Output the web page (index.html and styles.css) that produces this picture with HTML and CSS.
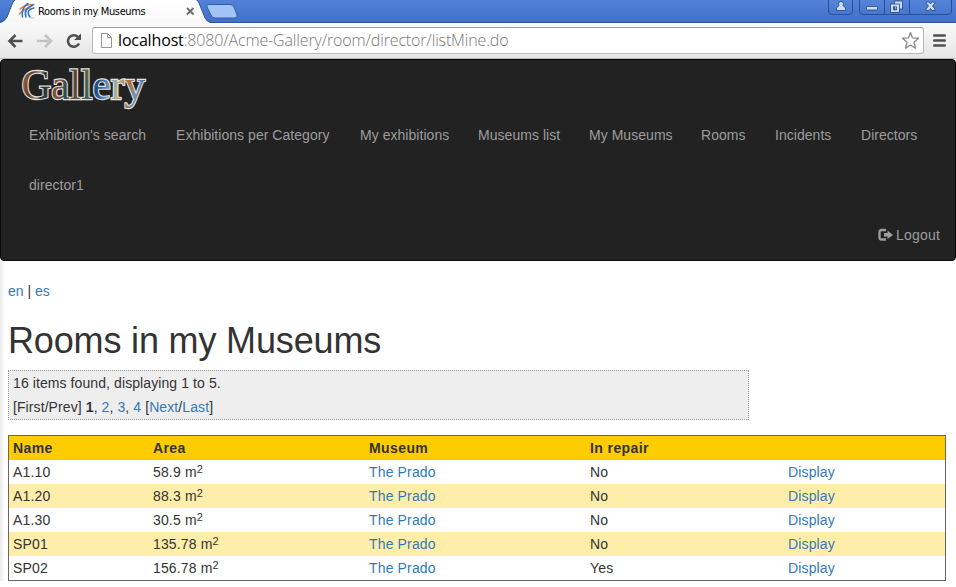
FILE: index.html
```html
<!DOCTYPE html>
<html lang="en">
<head>
<meta charset="utf-8">
<title>Rooms in my Museums</title>
<link rel="stylesheet" href="styles.css">
</head>
<body>
<header class="browser">
  <div class="tabs">
    <svg class="tab-art" width="956" height="23" viewBox="0 0 956 23">
      <defs>
        <linearGradient id="tab" x2="0" y2="1"><stop stop-color="#fff"/><stop offset="1" stop-color="#f8f8f8"/></linearGradient>
        <linearGradient id="win" x2="0" y2="1"><stop stop-color="#5685d9"/><stop offset="1" stop-color="#4676cd"/></linearGradient>
      </defs>
      <path d="M0 22.5H956" stroke="#2c559f"/>
      <path d="M0 23Q5 22 7 17L13 2Q14 0 16 0H195Q198 0 199 3L205 18Q207 22 211 23Z" fill="url(#tab)"/>
      <path d="M0 22Q5 21 7 17L13 2L15 0M197 0L199 3L205 18Q207 22 211 22.5" fill="none" stroke="#3159a5"/>
      <path d="M209 4.500H230Q233 4.500 234 7L237 15Q238 18 235 18H215Q212 18 211 15L207 7Q206 4.500 209 4.500Z" fill="#a2c4f4" stroke="#315da9"/>
      <g fill="none" stroke-linecap="round">
        <path d="M20 9Q25 4 34 4.500M19.500 14Q23 9 30 8" stroke="#f58220" stroke-width="1.600"/>
        <path d="M22.500 17Q21 8 28 3.500M26 17Q23 9 33 5M30 17Q25 10 34 8" stroke="#2c72cf" stroke-width="1.500"/>
        <path d="M31 18H34" stroke="#f5b070" stroke-width="1"/>
      </g>
      <path d="M187 8L193.500 14.500M193.500 8L187 14.500" stroke="#6b6b6b" stroke-width="1.800"/>
      <g fill="url(#win)" stroke="#294e96">
        <path d="M828.500 -1V11Q828.500 14.500 832 14.500H849Q852.500 14.500 852.500 11V-1Z"/>
        <path d="M859.500 -1V11Q859.500 14.500 863 14.500H948Q951.500 14.500 951.500 11V-1ZM884.500 0V14M909.500 0V14"/>
      </g>
      <g fill="#cbdcf8" stroke="#24427b" stroke-width=".8">
        <path d="M839 5.500A2.500 2.500 0 1 1 843 5.500L845.500 8V10.500H836.500V8Z"/>
        <rect x="866.500" y="6.500" width="11" height="3.500" rx="1"/>
        <path d="M894.500 1H902.500V9H894.500Z"/>
        <path fill-rule="evenodd" d="M890.500 4H899.500V12.500H890.500ZM893.500 6.800V9.800H896.500V6.800Z"/>
        <path d="M926 2H929L930.500 4L932 2H935V3L932.500 6L935 9V10.500H932L930.500 8.500L929 10.500H926V9L928.500 6L926 3Z"/>
      </g>
    </svg>
    <span class="tab-title">Rooms in my Museums</span>
  </div>
  <div class="toolbar">
    <svg class="nav-icons" width="84" height="35" viewBox="0 0 84 35" fill="none">
      <path d="M22.500 18H10M15.500 12L9.500 18L15.500 24" stroke="#505050" stroke-width="2.600"/>
      <path d="M37 18H50M45 12L51 18L45 24" stroke="#c3c3c3" stroke-width="2.600"/>
      <path d="M78 14A5.800 5.800 0 1 0 79 20.500" stroke="#505050" stroke-width="2.600"/><path d="M81 10.500V17H74Z" fill="#505050"/>
    </svg>
    <div class="address">
      <svg width="13" height="16" viewBox="0 0 13 16" fill="#fafafa" stroke="#969696"><path d="M1.500 1.500H7.500L11.500 5.500V15.500H1.500ZM7.500 1.500V5.500H11.500"/></svg>
      <span class="url"><b>localhost</b>:8080/Acme-Gallery/room/director/listMine.do</span>
      <svg class="star" width="20" height="19" viewBox="0 0 20 19" fill="#fff" stroke="#858585" stroke-width="1.200" stroke-linejoin="round"><path d="M10.500 1.500L12.500 7L18.500 7.200L14 11.200L15.500 17.200L10.500 14L5.500 17.200L7 11.200L2.500 7.200L8.500 7Z"/></svg>
    </div>
    <svg class="menu" width="13" height="13" viewBox="0 0 13 13" stroke="#505050" stroke-width="2.600" stroke-linecap="round"><path d="M1.300 1.500H11.700M1.300 6.500H11.700M1.300 11.500H11.700"/></svg>
  </div>
</header>
<nav class="navbar">
  <svg class="logo" width="150" height="51" viewBox="0 0 150 51">
    <defs><linearGradient id="paint" gradientUnits="userSpaceOnUse" x1="20" y1="15" x2="147" y2="38">
      <stop stop-color="#a96435"/><stop offset=".08" stop-color="#65402b"/><stop offset=".14" stop-color="#af9f8e"/><stop offset=".18" stop-color="#222c2b"/><stop offset=".3" stop-color="#8d553d"/><stop offset=".36" stop-color="#264e50"/><stop offset=".42" stop-color="#69412b"/><stop offset=".5" stop-color="#586642"/><stop offset=".6" stop-color="#184d88"/><stop offset=".68" stop-color="#6193bd"/><stop offset=".76" stop-color="#b1b48e"/><stop offset=".84" stop-color="#ad6b36"/><stop offset=".91" stop-color="#7194b2"/><stop offset="1" stop-color="#203e6f"/>
    </linearGradient></defs>
    <text class="logo-text" x="19.5" y="40" textLength="126" lengthAdjust="spacingAndGlyphs">Gallery</text>
  </svg>
  <div class="links">
    <a>Exhibition's search</a><a>Exhibitions per Category</a><a>My exhibitions</a><a>Museums list</a><a>My Museums</a><a>Rooms</a><a>Incidents</a><a>Directors</a><a>director1</a>
  </div>
  <a class="logout"><svg width="15" height="14" viewBox="0 0 15 14"><path d="M8 2H3.500Q1.500 2 1.500 4V9.500Q1.500 11.500 3.500 11.500H8" fill="none" stroke="#9d9d9d" stroke-width="2.300"/><path d="M6 5H9.500V2.500L15 7L9.500 11V8.500H6Z" fill="#9d9d9d"/></svg><span>Logout</span></a>
</nav>
<main>
  <div class="language"><a>en</a> | <a>es</a></div>
  <h1>Rooms in my Museums</h1>
  <div class="pagination"><div class="found">16 items found, displaying 1 to 5.</div><div class="pages">[First/Prev] <strong>1</strong>, <a>2</a>, <a>3</a>, <a>4</a> [<a>Next</a>/<a>Last</a>]</div></div>
  <table>
    <colgroup><col class="c-name"><col class="c-area"><col class="c-museum"><col class="c-repair"><col></colgroup>
    <thead><tr><th>Name</th><th>Area</th><th>Museum</th><th>In repair</th><th></th></tr></thead>
    <tbody>
      <tr><td>A1.10</td><td>58.9 m<sup>2</sup></td><td><a>The Prado</a></td><td>No</td><td><a>Display</a></td></tr>
      <tr><td>A1.20</td><td>88.3 m<sup>2</sup></td><td><a>The Prado</a></td><td>No</td><td><a>Display</a></td></tr>
      <tr><td>A1.30</td><td>30.5 m<sup>2</sup></td><td><a>The Prado</a></td><td>No</td><td><a>Display</a></td></tr>
      <tr><td>SP01</td><td>135.78 m<sup>2</sup></td><td><a>The Prado</a></td><td>No</td><td><a>Display</a></td></tr>
      <tr><td>SP02</td><td>156.78 m<sup>2</sup></td><td><a>The Prado</a></td><td>Yes</td><td><a>Display</a></td></tr>
    </tbody>
  </table>
</main>
</body>
</html>
```
FILE: styles.css
```css
* { box-sizing: border-box; }
html, body { height: 100%; overflow: hidden; }
body { margin: 0; background: #fff; color: #333; font: 14px/20px "Liberation Sans", Arial, sans-serif; }
a { color: #337ab7; text-decoration: none; }
.browser { height: 59px; }
.tabs { height: 23px; position: relative; background: linear-gradient(#5381d8, #3f6fc8); }
.tab-art { display: block; }
.tab-title { position: absolute; left: 38px; top: 4px; color: #000; font: 11px/15px "DejaVu Sans Condensed", "Noto Sans", sans-serif; white-space: nowrap; letter-spacing: -.37px; }
.toolbar { height: 36px; padding-bottom: 1px; display: flex; align-items: center; background: linear-gradient(#fafafa, #e5e5e5); border-bottom: 1px solid #b5b5b5; }
.nav-icons { flex: none; margin-right: 8px; }
.address { width: 832px; height: 27px; padding: 0 3px 0 7px; display: flex; align-items: center; background: #fff; border: 1px solid #b9b9b9; border-top-color: #9e9e9e; border-radius: 3px; }
.url { margin-left: 5px; color: #777; font: 300 16px/24px "Open Sans", "Noto Sans", sans-serif; letter-spacing: -.15px; white-space: nowrap; }
.url b { color: #000; font-weight: 400; letter-spacing: -.15px; }
.star { margin-left: auto; }
.menu { margin-left: 9px; }
.navbar { height: 202px; background: #222; border: 1px solid #080808; border-radius: 4px; }
.logo { display: block; height: 50px; overflow: visible; }
.logo-text { font: 43px "Liberation Serif", serif; fill: url(#paint); stroke: #e2e2e2; stroke-width: 2.300px; paint-order: stroke; }
.links { display: grid; grid-template-columns: 147px 184px 118px 111px 112px 74px 86px 87px; padding-left: 13px; }
.links a { height: 50px; padding: 15px; color: #9d9d9d; white-space: nowrap; letter-spacing: .04px; }
.logout { display: flex; justify-content: flex-end; padding: 15px; gap: 3px; color: #9d9d9d; letter-spacing: .2px; }
.logout svg { margin-top: 3px; }
main { padding: 20px 8px 0; background: linear-gradient(90deg, #ebebeb, #fff 5px); }
h1 { margin: 20px 0 10px; font-size: 36px; font-weight: 400; line-height: 39px; letter-spacing: -.16px; }
.pagination { width: 741px; height: 50px; padding: 0 4px; background: #eee; border: 1px dotted #999; line-height: 24px; letter-spacing: .09px; }
table { width: 938px; margin-top: 15px; border: 1px solid #666; border-collapse: separate; border-spacing: 0; table-layout: fixed; }
.c-name { width: 140px; }
.c-area { width: 216px; }
.c-museum { width: 221px; }
.c-repair { width: 198px; }
th, td { height: 24px; padding: 2px 4px; line-height: 20px; text-align: left; white-space: nowrap; }
th { background: #fc0; letter-spacing: .4px; }
td { letter-spacing: .15px; }
tbody tr:nth-child(even) { background: #fea; }
sup { position: relative; top: -.4em; font-size: 11px; line-height: 0; vertical-align: baseline; }
```
